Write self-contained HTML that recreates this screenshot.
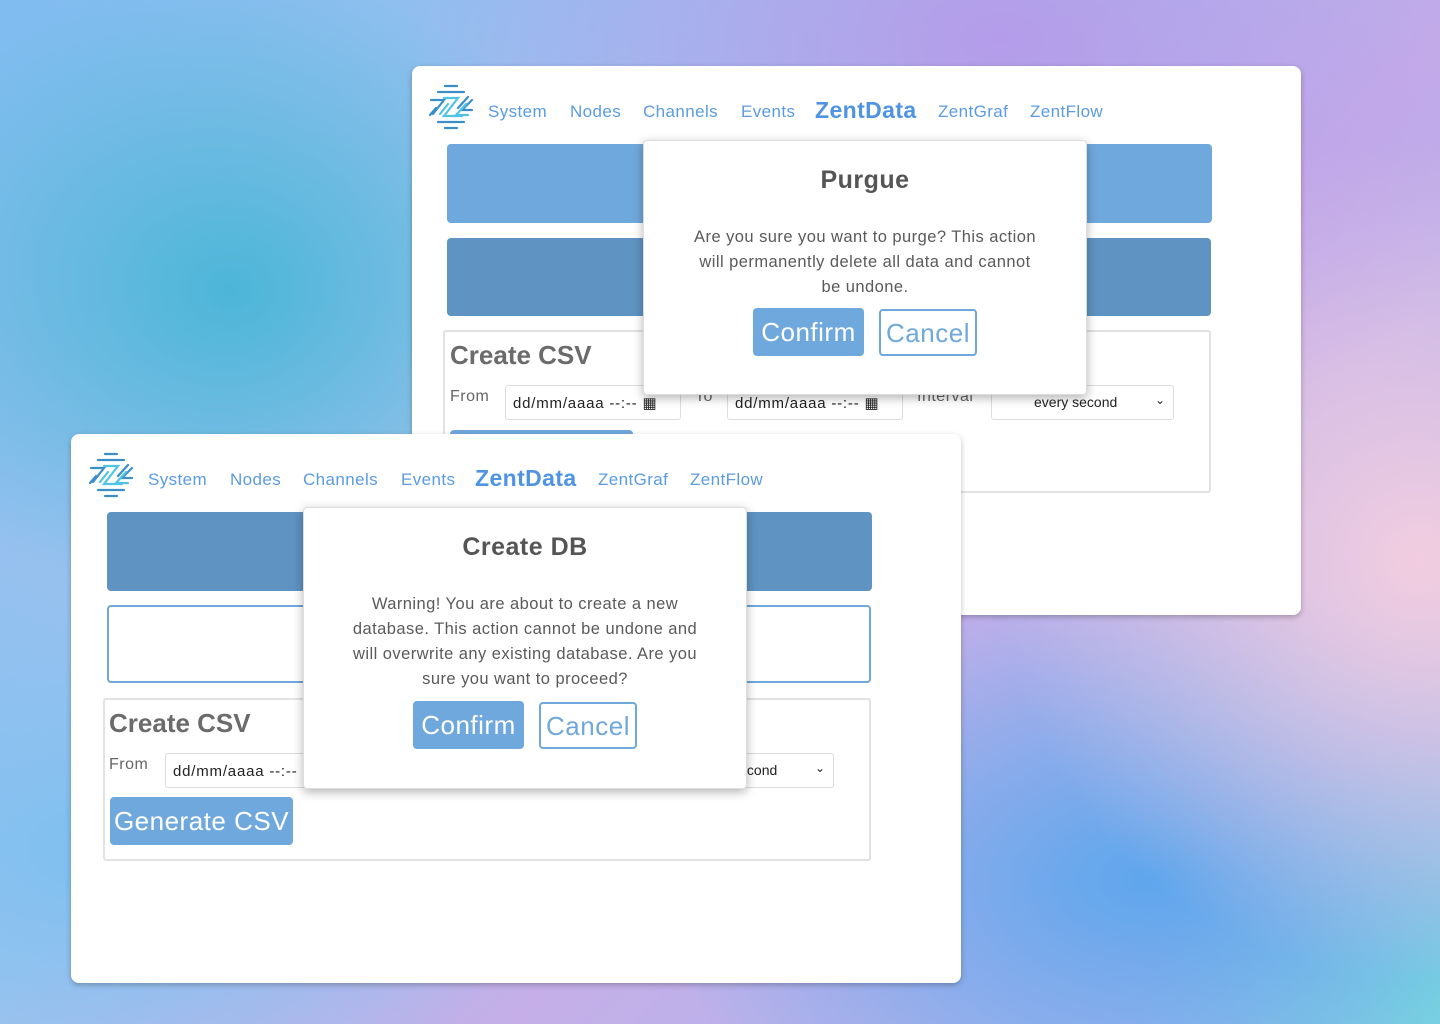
<!DOCTYPE html>
<html><head><meta charset="utf-8"><style>
*{margin:0;padding:0;box-sizing:border-box}
body{width:1440px;height:1024px;overflow:hidden;position:relative;font-family:"Liberation Sans",sans-serif;
background:
radial-gradient(ellipse 380px 320px at 230px 290px,#4cb6d8 0%,rgba(76,182,216,0) 100%),
radial-gradient(ellipse 600px 400px at 1000px 40px,#b49cea 0%,rgba(180,156,234,0) 100%),
radial-gradient(ellipse 420px 420px at 1420px 560px,#f2cde0 0%,rgba(242,205,224,0) 100%),
radial-gradient(ellipse 500px 300px at 1150px 880px,#5ea6ec 0%,rgba(94,166,236,0) 100%),
radial-gradient(ellipse 300px 260px at 1440px 1000px,#7fe0dc 0%,rgba(127,224,220,0) 100%),
radial-gradient(ellipse 500px 300px at 100px 850px,#7ec0f0 0%,rgba(126,192,240,0) 100%),
linear-gradient(135deg,#7fbcf0 0%,#a7c4ee 40%,#c8aee8 60%,#9fb8ee 100%);}
.win{position:absolute;background:#fff;border-radius:8px;box-shadow:0 2px 6px rgba(0,0,0,.25);overflow:hidden}
.a{position:absolute}
.nav{position:absolute;color:#5b9be0;font-size:17px;white-space:nowrap;letter-spacing:.4px}
.nav span{position:absolute;top:0}
.nav b{position:absolute;top:-5px;font-size:23px;color:#4f94e4}
.bar{position:absolute;border-radius:4px}
.box{position:absolute;border:2px solid #e2e2e2;border-radius:3px}
.h{position:absolute;font-size:26px;font-weight:bold;color:#6b6b6b}
.lbl{position:absolute;font-size:16px;color:#666;letter-spacing:.5px}
.inp{position:absolute;border:1px solid #ddd;border-radius:3px;font-size:15px;color:#222;padding:8px 0 0 7px;height:35px;letter-spacing:.8px;white-space:nowrap;overflow:hidden}
.modal{position:absolute;background:#fff;border:1px solid #ddd;border-radius:4px;box-shadow:0 3px 10px rgba(0,0,0,.3);text-align:center}
.mt{position:absolute;left:0;right:0;font-size:25px;color:#555;font-weight:bold;letter-spacing:.5px}
.mp{position:absolute;left:0;right:0;font-size:16.5px;color:#5a5a5a;line-height:25px;letter-spacing:.45px;white-space:nowrap}
.bc{position:absolute;background:#6fa8dc;color:#fff;border-radius:4px;font-size:26px;text-align:center;line-height:48px;letter-spacing:.5px}
.bx{position:absolute;border:2px solid #6fa8dc;color:#6fa8dc;border-radius:4px;font-size:26px;text-align:center;line-height:44px;background:#fff;letter-spacing:.5px}
</style></head><body>

<!-- Window 1 -->
<div class="win" style="left:412px;top:66px;width:889px;height:549px">
  <svg class="a" style="left:16px;top:18px" width="46" height="46" viewBox="0 0 46 46" fill="none" stroke-linecap="round">
    <g stroke="#3b8fc9" stroke-width="2.2">
      <line x1="17" y1="2" x2="29" y2="2"/><line x1="10" y1="8" x2="36" y2="8"/>
      <line x1="10" y1="38" x2="36" y2="38"/><line x1="17" y1="44" x2="29" y2="44"/>
      <path d="M3 16 H16 L5 30"/><path d="M8 24 L2 31"/>
      <path d="M44 16 L34 26 H44"/><path d="M40 13 L30 24"/>
    </g>
    <g stroke="#4fc4e8" stroke-width="2.2">
      <path d="M16 14 H30 L16 32 H34"/><path d="M20 20 L12 30"/><path d="M38 20 L28 31 H40"/>
    </g>
  </svg>
  <div class="nav" style="left:0;top:36px;width:800px;height:30px">
    <span style="left:76px">System</span><span style="left:158px">Nodes</span><span style="left:231px">Channels</span><span style="left:329px">Events</span><b style="left:403px">ZentData</b><span style="left:526px">ZentGraf</span><span style="left:618px">ZentFlow</span>
  </div>
  <div class="bar" style="left:35px;top:78px;width:765px;height:79px;background:#6fa8dc"></div>
  <div class="bar" style="left:35px;top:172px;width:764px;height:78px;background:#5f93c2"></div>
  <div class="box" style="left:31px;top:264px;width:768px;height:163px"></div>
  <div class="h" style="left:38px;top:274px">Create CSV</div>
  <div class="lbl" style="left:38px;top:322px">From</div>
  <div class="inp" style="left:93px;top:319px;width:176px">dd/mm/aaaa --:-- ▦</div>
  <div class="lbl" style="left:283px;top:322px">To</div>
  <div class="inp" style="left:315px;top:319px;width:176px">dd/mm/aaaa --:-- ▦</div>
  <div class="lbl" style="left:505px;top:322px">Interval</div>
  <div class="inp" style="left:579px;top:319px;width:183px;font-size:14px;padding-left:42px;letter-spacing:0">every second<span style="position:absolute;right:8px;top:7px;font-size:12px">&#8964;</span></div>
  <div class="bar" style="left:38px;top:364px;width:183px;height:48px;background:#6fa8dc"></div>
  <div class="modal" style="left:231px;top:74px;width:444px;height:255px">
    <div class="mt" style="top:25px">Purgue</div>
    <div class="mp" style="top:84px">Are you sure you want to purge? This action<br>will permanently delete all data and cannot<br>be undone.</div>
    <div class="bc" style="left:109px;top:167px;width:111px;height:48px">Confirm</div>
    <div class="bx" style="left:235px;top:168px;width:98px;height:47px">Cancel</div>
  </div>
</div>

<!-- Window 2 -->
<div class="win" style="left:71px;top:434px;width:890px;height:549px">
  <svg class="a" style="left:17px;top:18px" width="46" height="46" viewBox="0 0 46 46" fill="none" stroke-linecap="round">
    <g stroke="#3b8fc9" stroke-width="2.2">
      <line x1="17" y1="2" x2="29" y2="2"/><line x1="10" y1="8" x2="36" y2="8"/>
      <line x1="10" y1="38" x2="36" y2="38"/><line x1="17" y1="44" x2="29" y2="44"/>
      <path d="M3 16 H16 L5 30"/><path d="M8 24 L2 31"/>
      <path d="M44 16 L34 26 H44"/><path d="M40 13 L30 24"/>
    </g>
    <g stroke="#4fc4e8" stroke-width="2.2">
      <path d="M16 14 H30 L16 32 H34"/><path d="M20 20 L12 30"/><path d="M38 20 L28 31 H40"/>
    </g>
  </svg>
  <div class="nav" style="left:0;top:36px;width:800px;height:30px">
    <span style="left:77px">System</span><span style="left:159px">Nodes</span><span style="left:232px">Channels</span><span style="left:330px">Events</span><b style="left:404px">ZentData</b><span style="left:527px">ZentGraf</span><span style="left:619px">ZentFlow</span>
  </div>
  <div class="bar" style="left:36px;top:78px;width:765px;height:79px;background:#5f93c2"></div>
  <div class="bar" style="left:36px;top:171px;width:764px;height:78px;background:#fff;border:2px solid #6fa8dc"></div>
  <div class="box" style="left:32px;top:264px;width:768px;height:163px"></div>
  <div class="h" style="left:38px;top:274px">Create CSV</div>
  <div class="lbl" style="left:38px;top:322px">From</div>
  <div class="inp" style="left:94px;top:319px;width:176px">dd/mm/aaaa --:-- ▦</div>
  <div class="inp" style="left:580px;top:319px;width:183px;font-size:14px;padding-left:42px;letter-spacing:0">every second<span style="position:absolute;right:8px;top:7px;font-size:12px">&#8964;</span></div>
  <div class="bc" style="left:39px;top:363px;width:183px;height:48px">Generate CSV</div>
  <div class="modal" style="left:232px;top:73px;width:444px;height:282px">
    <div class="mt" style="top:25px">Create DB</div>
    <div class="mp" style="top:84px">Warning! You are about to create a new<br>database. This action cannot be undone and<br>will overwrite any existing database. Are you<br>sure you want to proceed?</div>
    <div class="bc" style="left:109px;top:193px;width:111px;height:48px">Confirm</div>
    <div class="bx" style="left:235px;top:194px;width:98px;height:47px">Cancel</div>
  </div>
</div>
</body></html>
